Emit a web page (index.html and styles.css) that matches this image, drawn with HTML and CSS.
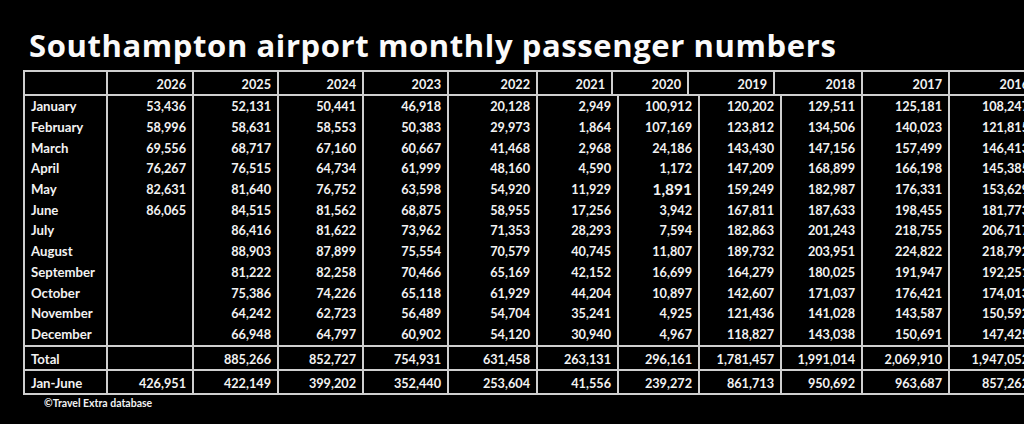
FILE: index.html
```html
<!DOCTYPE html>
<html lang="en">
<head>
<meta charset="utf-8">
<title>Southampton airport monthly passenger numbers</title>
<link rel="stylesheet" href="styles.css">
</head>
<body>
<h1 class="title">Southampton airport monthly passenger numbers</h1>
<div class="sheet">
  <table class="grid head">
    <colgroup>
      <col style="width:83px"><col style="width:86px"><col style="width:85px"><col style="width:85px"><col style="width:85px"><col style="width:89px"><col style="width:75px"><col style="width:76px"><col style="width:86px"><col style="width:88px"><col style="width:87px"><col style="width:87px">
    </colgroup>
    <tr><th></th><th>2026</th><th>2025</th><th>2024</th><th>2023</th><th>2022</th><th>2021</th><th>2020</th><th>2019</th><th>2018</th><th>2017</th><th>2016</th></tr>
  </table>
  <table class="grid body">
    <colgroup>
      <col style="width:83px"><col style="width:86px"><col style="width:85px"><col style="width:85px"><col style="width:85px"><col style="width:89px"><col style="width:81px"><col style="width:81px"><col style="width:82px"><col style="width:81px"><col style="width:87px"><col style="width:87px">
    </colgroup>
    <tr class="m first"><td>January</td><td>53,436</td><td>52,131</td><td>50,441</td><td>46,918</td><td>20,128</td><td>2,949</td><td>100,912</td><td>120,202</td><td>129,511</td><td>125,181</td><td>108,247</td></tr>
    <tr class="m"><td>February</td><td>58,996</td><td>58,631</td><td>58,553</td><td>50,383</td><td>29,973</td><td>1,864</td><td>107,169</td><td>123,812</td><td>134,506</td><td>140,023</td><td>121,815</td></tr>
    <tr class="m"><td>March</td><td>69,556</td><td>68,717</td><td>67,160</td><td>60,667</td><td>41,468</td><td>2,968</td><td>24,186</td><td>143,430</td><td>147,156</td><td>157,499</td><td>146,413</td></tr>
    <tr class="m"><td>April</td><td>76,267</td><td>76,515</td><td>64,734</td><td>61,999</td><td>48,160</td><td>4,590</td><td>1,172</td><td>147,209</td><td>168,899</td><td>166,198</td><td>145,385</td></tr>
    <tr class="m"><td>May</td><td>82,631</td><td>81,640</td><td>76,752</td><td>63,598</td><td>54,920</td><td>11,929</td><td><span class="big">1,891</span></td><td>159,249</td><td>182,987</td><td>176,331</td><td>153,629</td></tr>
    <tr class="m"><td>June</td><td>86,065</td><td>84,515</td><td>81,562</td><td>68,875</td><td>58,955</td><td>17,256</td><td>3,942</td><td>167,811</td><td>187,633</td><td>198,455</td><td>181,773</td></tr>
    <tr class="m"><td>July</td><td></td><td>86,416</td><td>81,622</td><td>73,962</td><td>71,353</td><td>28,293</td><td>7,594</td><td>182,863</td><td>201,243</td><td>218,755</td><td>206,717</td></tr>
    <tr class="m"><td>August</td><td></td><td>88,903</td><td>87,899</td><td>75,554</td><td>70,579</td><td>40,745</td><td>11,807</td><td>189,732</td><td>203,951</td><td>224,822</td><td>218,792</td></tr>
    <tr class="m"><td>September</td><td></td><td>81,222</td><td>82,258</td><td>70,466</td><td>65,169</td><td>42,152</td><td>16,699</td><td>164,279</td><td>180,025</td><td>191,947</td><td>192,251</td></tr>
    <tr class="m"><td>October</td><td></td><td>75,386</td><td>74,226</td><td>65,118</td><td>61,929</td><td>44,204</td><td>10,897</td><td>142,607</td><td>171,037</td><td>176,421</td><td>174,013</td></tr>
    <tr class="m"><td>November</td><td></td><td>64,242</td><td>62,723</td><td>56,489</td><td>54,704</td><td>35,241</td><td>4,925</td><td>121,436</td><td>141,028</td><td>143,587</td><td>150,592</td></tr>
    <tr class="m last"><td>December</td><td></td><td>66,948</td><td>64,797</td><td>60,902</td><td>54,120</td><td>30,940</td><td>4,967</td><td>118,827</td><td>143,038</td><td>150,691</td><td>147,425</td></tr>
    <tr class="sum"><td>Total</td><td></td><td>885,266</td><td>852,727</td><td>754,931</td><td>631,458</td><td>263,131</td><td>296,161</td><td>1,781,457</td><td>1,991,014</td><td>2,069,910</td><td>1,947,052</td></tr>
    <tr class="sum"><td>Jan-June</td><td>426,951</td><td>422,149</td><td>399,202</td><td>352,440</td><td>253,604</td><td>41,556</td><td>239,272</td><td>861,713</td><td>950,692</td><td>963,687</td><td>857,262</td></tr>
  </table>
  <p class="source">©Travel Extra database</p>
</div>
</body>
</html>
```
FILE: styles.css
```css
html, body {
  margin: 0;
  padding: 0;
  background: #000;
  overflow: hidden;
}
body {
  width: 1024px;
  height: 424px;
  color: #f2f2f2;
  font-family: Lato, "Open Sans", "Liberation Sans", sans-serif;
  font-weight: 700;
}
.title {
  margin: 0 0 4px 0;
  padding: 25px 0 0 29px;
  font-family: "Open Sans", Lato, sans-serif;
  font-size: 31px;
  line-height: 41px;
  font-weight: 700;
  letter-spacing: 0.6px;
  color: #fafafa;
  white-space: nowrap;
}
.sheet {
  margin-left: 23px;
  width: 1014px;
}
.grid {
  border-collapse: collapse;
  table-layout: fixed;
  width: 1012px;
  font-size: 12.7px;
}
.grid th, .grid td {
  border: 2px solid #cfcfcf;
  padding: 0 6px 0 6px;
  text-align: right;
  white-space: nowrap;
  overflow: visible;
}
.grid td:first-child {
  text-align: left;
  font-size: 13.2px;
}
.head th {
  height: 20px;
  padding-top: 2px;
  font-weight: 700;
}
.body td {
  border-top: 0;
  border-bottom: 0;
}
.body tr.m td {
  height: 20.7px;
}
.body tr.last td {
  padding-bottom: 1px;
}
.body tr.sum td {
  border-top: 2px solid #cfcfcf;
  height: 20px;
  padding-top: 2px;
}
.body tr.sum:last-child td {
  border-bottom: 2px solid #cfcfcf;
}
.big {
  font-size: 15.5px;
}
.source {
  margin: 1px 0 0 21px;
  font-size: 10.5px;
  line-height: 14px;
  font-weight: 700;
}
```
